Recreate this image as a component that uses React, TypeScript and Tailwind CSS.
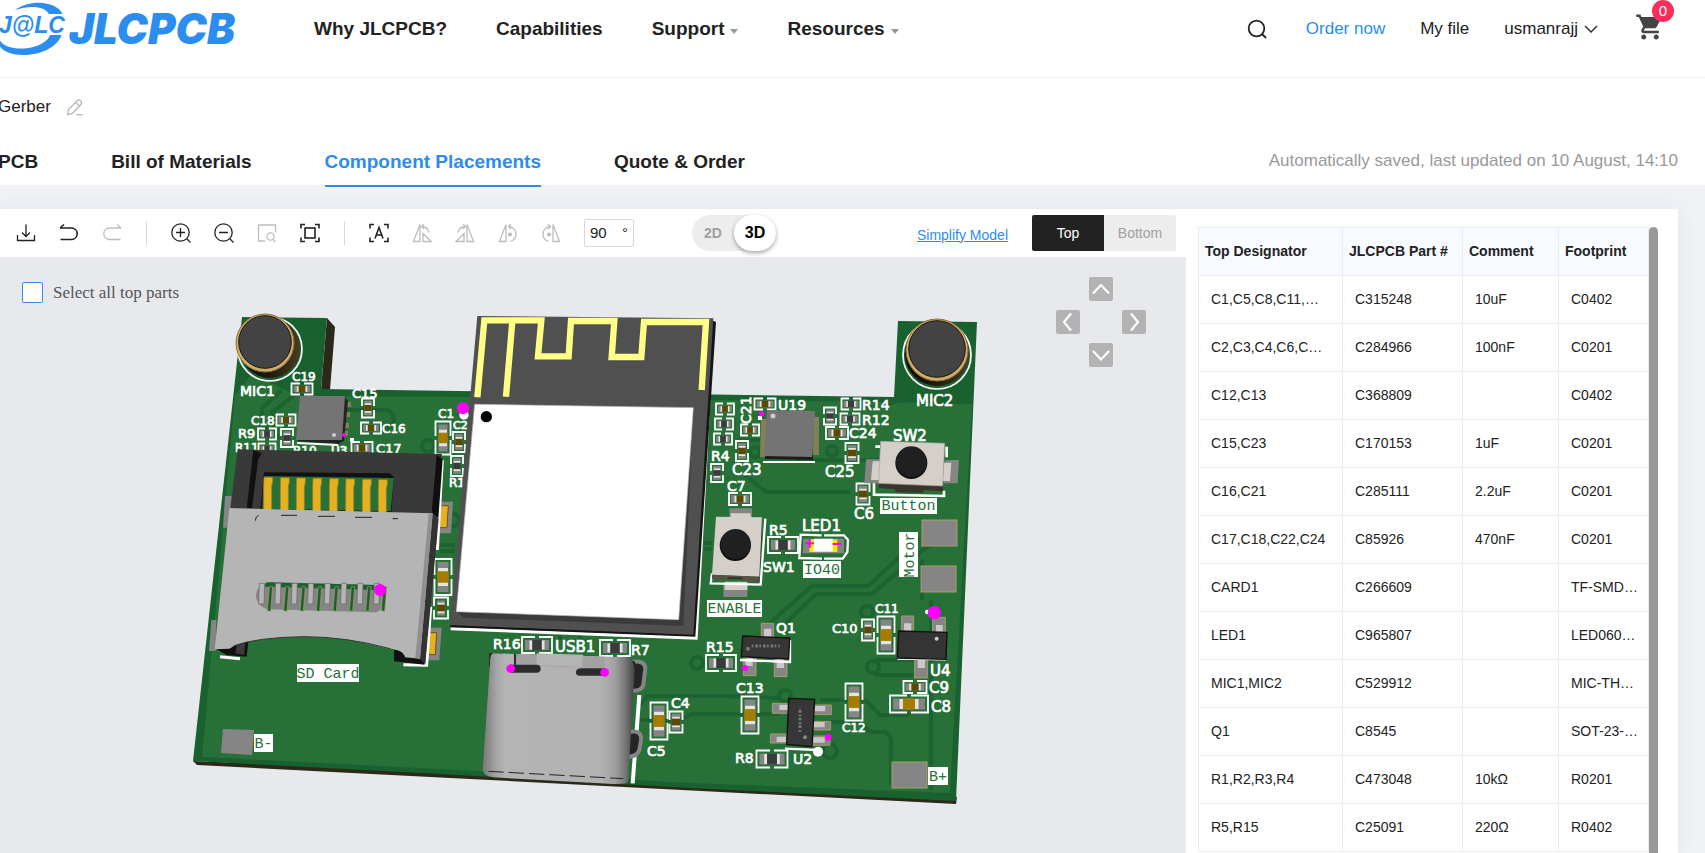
import { ReactNode } from "react";
import { MdShoppingCart } from "react-icons/md";

const rows = [
  ["C1,C5,C8,C11,…", "C315248", "10uF", "C0402"],
  ["C2,C3,C4,C6,C…", "C284966", "100nF", "C0201"],
  ["C12,C13", "C368809", "", "C0402"],
  ["C15,C23", "C170153", "1uF", "C0201"],
  ["C16,C21", "C285111", "2.2uF", "C0201"],
  ["C17,C18,C22,C24", "C85926", "470nF", "C0201"],
  ["CARD1", "C266609", "", "TF-SMD…"],
  ["LED1", "C965807", "", "LED060…"],
  ["MIC1,MIC2", "C529912", "", "MIC-TH…"],
  ["Q1", "C8545", "", "SOT-23-…"],
  ["R1,R2,R3,R4", "C473048", "10kΩ", "R0201"],
  ["R5,R15", "C25091", "220Ω", "R0402"],
];

/* ---------- icons ---------- */

function Icon({ children, size = 20, sw = 1.3 }: { children: ReactNode; size?: number; sw?: number }) {
  return (
    <svg width={size} height={size} viewBox="0 0 20 20" fill="none" stroke="currentColor" strokeWidth={sw} aria-hidden="true" className="block shrink-0">
      {children}
    </svg>
  );
}

const corners = "M1 5.5V1.5h4M15 1.5h4v4M19 14.5v4h-4M5 18.5H1v-4";

const icons = {
  download: <Icon><path d="M10 1.5v12M6 9.5l4 4 4-4M1.5 12v5.5h17V12" /></Icon>,
  undo: <Icon sw={1.6}><path d="M1 5h12a6 5.8 0 0 1 0 11.5H1.5M5 1.5L1 5" /></Icon>,
  redo: <Icon><path d="M19 5H7a6 5.8 0 0 0 0 11.5h11.5M15 1.5L19 5" /></Icon>,
  zoomIn: <Icon><circle cx="9.5" cy="9.5" r="8.7" /><path d="M9.5 5v9M5 9.5h9M15.8 15.8l3.7 3.7" /></Icon>,
  zoomOut: <Icon><circle cx="9.5" cy="9.5" r="8.7" /><path d="M5 9.5h9M15.8 15.8l3.7 3.7" /></Icon>,
  area: <Icon><path d="M8 18H1.5V2h17v7.5" /><circle cx="13.5" cy="13.5" r="3.6" /><path d="M16 16.5l2.5 2.5" /></Icon>,
  fit: <Icon sw={1.6}><path d={corners} /><rect x="5" y="5" width="10" height="10" /></Icon>,
  auto: <Icon sw={1.6}><path d={corners} /><path d="M6 15.5L10 4.5l4 11M7.5 12h5" /></Icon>,
  rotL: <Icon><path d="M8 1.5V18.5H1.5zM11 18.5V10.5l8 8zM9.5 3.5c4 0 6.5 2 7.5 6M12 1L9.5 3.5 12 6" /></Icon>,
  rotR: <Icon><path d="M12 1.5V18.5h6.5zM9 18.5V10.5l-8 8zM10.5 3.5c-4 0-6.5 2-7.5 6M8 1l2.5 2.5L8 6" /></Icon>,
  turnL: <Icon><path d="M8 1.5V18.5H1.5zM10.5 3.5c4.5.5 7.5 3.5 7.5 7.5s-2.5 6.5-5.5 7.5M13 1l-2.5 2.5L13 6" /><circle cx="12" cy="11.5" r="1.4" fill="currentColor" /></Icon>,
  turnR: <Icon><path d="M12 1.5V18.5h6.5zM9.5 3.5C5 4 2 7 2 11s2.5 6.5 5.5 7.5M7 1l2.5 2.5L7 6" /><circle cx="8" cy="11.5" r="1.4" fill="currentColor" /></Icon>,
};

function Tool({ label, icon, off }: { label: string; icon: ReactNode; off?: boolean }) {
  return (
    <button type="button" aria-label={label} disabled={off} className={off ? "text-[#bdbdbd]" : "text-[#222]"}>
      {icon}
    </button>
  );
}

function Divider() {
  return <span className="mx-px h-6 w-px bg-[#d8d8d8]" />;
}

function PanButton({ label, d, place }: { label: string; d: string; place: string }) {
  return (
    <button type="button" aria-label={label} className={`flex h-6 w-6 items-center justify-center rounded-xs bg-[#b3b3b3] text-white ${place}`}>
      <Icon sw={2.2}><path d={d} /></Icon>
    </button>
  );
}

function Logo() {
  return (
    <svg width="238" height="56" viewBox="0 0 238 56" role="img" aria-label="JLCPCB" className="block shrink-0" fill="#2b8def">
      <path d="M15 10C25 3 38 1.5 48 4C56 6 61 10 62.5 14H49C45 7 32 4.5 15 10z" />
      <path d="M0 40.5C3 46 12 49 24 48.5C37 47.5 48 42 50 35H61.5C58 46 42 55 24 55C12 55 4 52 0 46.5z" />
      <text x="-1" y="33" fontFamily="'Liberation Sans', sans-serif" fontStyle="italic" fontWeight="700" fontSize="23">J@LC</text>
      <text x="69" y="44" fontFamily="Inter, sans-serif" fontStyle="italic" fontWeight="900" fontSize="42">JLCPCB</text>
    </svg>
  );
}

/* ---------- board ---------- */

type Kind = "gold" | "cap" | "res";
const bodyFill: Record<Kind, string> = { gold: "#a67c00", cap: "#5b4a05", res: "#3b3b3b" };

const chips: [number, number, number, number, Kind][] = [
  [302, 389, 21, 11, "cap"], [286, 420, 19, 11, "cap"], [267, 434, 18, 11, "res"], [287, 438, 12, 18, "res"],
  [267, 448, 17, 9, "res"], [368, 408, 12, 19, "cap"], [371, 428, 20, 11, "cap"], [362, 448, 21, 12, "cap"],
  [443, 438, 15, 33, "gold"], [459, 442, 12, 20, "cap"], [457, 466, 12, 20, "res"], [443, 577, 17, 36, "gold"],
  [441, 608, 14, 21, "cap"], [725, 409, 18, 11, "cap"], [724, 424, 18, 11, "res"], [723, 439, 18, 11, "res"],
  [717, 473, 12, 18, "res"], [765, 404, 21, 11, "cap"], [750, 430, 18, 11, "cap"], [742, 451, 12, 20, "cap"],
  [830, 416, 12, 17, "res"], [851, 404, 19, 11, "res"], [850, 419, 19, 11, "res"], [837, 433, 22, 12, "cap"],
  [852, 453, 13, 20, "cap"], [863, 494, 13, 21, "cap"], [740, 499, 22, 12, "cap"], [783, 545, 30, 16, "res"],
  [721, 663, 30, 16, "res"], [750, 715, 17, 37, "gold"], [772, 759, 31, 17, "res"], [854, 702, 17, 37, "gold"],
  [868, 630, 12, 21, "cap"], [886, 635, 17, 37, "gold"], [915, 687, 23, 12, "cap"], [909, 704, 38, 17, "gold"],
  [537, 645, 30, 16, "res"], [615, 648, 30, 16, "res"], [659, 721, 17, 37, "gold"], [676, 722, 13, 21, "cap"],
];

function Chip({ c }: { c: [number, number, number, number, Kind] }) {
  const [x, y, w0, h0, kind] = c;
  const tall = h0 > w0;
  const w = tall ? h0 : w0;
  const h = tall ? w0 : h0;
  const a = w / 2;
  const b = h / 2;
  const inset = h > 13 ? 3 : 2.2;
  return (
    <g transform={`translate(${x} ${y})${tall ? " rotate(90)" : ""}`}>
      <path d={`M-2 ${-b}H${-a}V${b}H-2M2 ${-b}H${a}V${b}H2`} fill="none" stroke="#fff" strokeWidth="1.8" />
      <rect x={-a + inset} y={-b + inset} width={w - inset * 2} height={h - inset * 2} fill="#858585" />
      <rect x={-a * 0.5} y={-b + inset + 0.5} width={a} height={h - inset * 2 - 1} fill="#e4e4e4" />
      <rect x={-a * 0.32} y={-b + inset} width={a * 0.64} height={h - inset * 2} fill={bodyFill[kind]} />
    </g>
  );
}

const marks: [string, number, number, number][] = [
  ["C19", 292, 381, 12], ["MIC1", 240, 396, 14], ["C18", 251, 425, 12], ["R9", 238, 438, 13], ["R11", 235, 452, 12],
  ["C15", 352, 398, 13], ["C16", 382, 433, 12], ["C17", 376, 453, 13], ["R10", 293, 455, 12], ["U3", 331, 455, 12],
  ["C1", 438, 418, 12], ["C2", 453, 429, 11], ["R1", 449, 487, 12], ["R4", 711, 461, 14], ["C23", 732, 475, 15],
  ["C7", 727, 491, 14], ["U19", 778, 410, 14], ["R14", 862, 410, 14], ["R12", 862, 425, 14], ["C24", 849, 438, 14],
  ["C25", 825, 477, 15], ["SW2", 893, 441, 15], ["C6", 854, 519, 15], ["MIC2", 916, 406, 15], ["R5", 769, 535, 14],
  ["LED1", 802, 531, 15], ["SW1", 763, 572, 14], ["C11", 875, 613, 12], ["C10", 832, 633, 13], ["Q1", 776, 633, 14],
  ["R15", 706, 652, 14], ["C13", 736, 693, 14], ["C12", 842, 732, 12], ["C9", 929, 693, 15], ["C8", 931, 712, 15],
  ["U4", 930, 676, 15], ["U2", 793, 764, 14], ["R8", 735, 763, 14], ["R16", 493, 649, 14], ["USB1", 555, 652, 15],
  ["R7", 631, 655, 14], ["C4", 671, 708, 14], ["C5", 647, 756, 14],
];

const labels: [string, number, number, number, number][] = [
  ["SD Card", 297, 664, 62, 18], ["ENABLE", 707, 600, 55, 17], ["Button", 880, 498, 57, 16],
  ["IO40", 803, 561, 38, 17], ["B-", 254, 734, 19, 18], ["B+", 928, 767, 20, 18],
];

function Pin({ x, y, w, h }: { x: number; y: number; w: number; h: number }) {
  return <rect x={x} y={y} width={w} height={h} fill="#858585" stroke="#a79f63" strokeWidth="1" />;
}

function Mic({ x, y, dx, dy, r }: { x: number; y: number; dx: number; dy: number; r: number }) {
  return (
    <g>
      <circle cx={x + dx} cy={y + dy} r={r + 3} fill="#19612f" stroke="#fff" strokeWidth="1.7" />
      <circle cx={x + dx} cy={y + dy - 1} r={r + 1} fill="url(#can)" />
      <circle cx={x} cy={y} r={r} fill="#cfac68" stroke="#8a6f3c" strokeWidth="1" />
      <circle cx={x} cy={y - 1} r={r - 2.7} fill="#434343" stroke="#1a1712" strokeWidth="1" />
    </g>
  );
}

function Board() {
  return (
    <svg viewBox="0 257 1186 596" className="block h-full w-full" role="img" aria-label="3D view of the board">
      <defs>
        <linearGradient id="can"><stop offset="0" stopColor="#0d0b08" /><stop offset="0.5" stopColor="#201a10" /><stop offset="1" stopColor="#4a3b22" /></linearGradient>
        <linearGradient id="shell">
          <stop offset="0" stopColor="#777" /><stop offset="0.09" stopColor="#a5a5a5" /><stop offset="0.15" stopColor="#b4b4b4" />
          <stop offset="0.78" stopColor="#b2b2b2" /><stop offset="0.87" stopColor="#a0a0a0" /><stop offset="0.94" stopColor="#767676" /><stop offset="1" stopColor="#444" />
        </linearGradient>
      </defs>

      {/* substrate */}
      <path d="M327 318L335 327L330 390L321 390z" fill="#2b2918" />
      <path d="M193 761L197 765L450 778L956 804L957 797L440 771z" fill="#2b2918" />
      <path d="M242 317L327 318L321 389L894 397L898 321L977 322L956 801L690 788L440 774L193 761z" fill="#19612f" />
      <path d="M235 396L470 397L890 402L972 404L950 793L690 783L440 769L202 757z" fill="#277038" />
      <path d="M255 376L320 391L325 325L300 318L243 355z" fill="#19612f" />
      <path d="M233 398L252 374L300 397z" fill="#277038" />

      {/* copper under the mask */}
      <g fill="none" stroke="#1c6331" strokeWidth="4">
        <path d="M270 440L262 420V408L282 390M278 440L272 424V412L296 394M288 400L310 380M340 410H385a9 9 0 0 1 0 18h-12" />
        <path d="M745 475L766 492H850M795 460H880M760 440H738M885 405L921 393L935 378M771 622L812 586H868L920 538M784 625L816 594H872L935 540" />
        <path d="M640 705L648 696H720L780 698M640 720H680L692 714H780M820 700H865L880 715H910M820 722H860L870 732H886L891 738V785M931 600V790M922 600V560M875 660h42M875 675h42" />
        <path d="M440 545H455M440 551H455M704 543H712M704 549H712M560 640V625M580 640V625" />
        <circle cx="697" cy="663" r="6" /><circle cx="867" cy="612" r="6" /><circle cx="830" cy="751" r="7" /><circle cx="785" cy="696" r="6" />
        <circle cx="755" cy="452" r="5" /><circle cx="832" cy="451" r="5" /><circle cx="428" cy="446" r="6" /><circle cx="873" cy="667" r="6" /><circle cx="453" cy="520" r="6" />
      </g>

      {/* pads */}
      <Pin x={922} y={520} w={35} h={26} />
      <Pin x={921} y={566} w={35} h={26} />
      <Pin x={892} y={762} w={35} h={26} />
      <path d="M223 729L254 730L252 755L221 753z" fill="#858585" />

      {/* reference marks */}
      <g fill="#fff" stroke="#fff" strokeWidth="0.7" fontFamily="'DejaVu Sans', sans-serif">
        {marks.map(([t, x, y, s]) => (
          <text key={t + x} x={x} y={y} fontSize={s}>{t}</text>
        ))}
        <text transform="translate(751 424) rotate(-90)" fontSize="14">C21</text>
      </g>
      {labels.map(([t, x, y, w, h]) => (
        <g key={t}>
          <rect x={x} y={y} width={w} height={h} fill="#fff" />
          <text x={x + w / 2} y={y + h - 4} textAnchor="middle" fontSize="15" fill="#277038" fontFamily="'Liberation Mono', monospace">{t}</text>
        </g>
      ))}
      <rect x="899" y="532" width="19" height="45" fill="#fff" />
      <text transform="translate(914 555) rotate(-90)" textAnchor="middle" fontSize="15" fill="#277038" fontFamily="'Liberation Mono', monospace">Motor</text>

      {chips.map((c) => <Chip key={`${c[0]}-${c[1]}`} c={c} />)}

      <Mic x={265} y={343} dx={5} dy={6} r={29} />
      <Mic x={937} y={350} dx={0} dy={5} r={31} />

      {/* microphone amplifiers */}
      <g fill="#857f58">
        <path d="M345 402h6v5h-6zM344 412h6v5h-6zM343 423h6v5h-6zM342 431h6v5h-6z" />
        <path d="M761 419h6v38h-7zM814 417h5v38h-6z" />
      </g>
      <path d="M344 396L348 401L344 441L338 444L297 441L300 439z" fill="#232323" />
      <path d="M300 396L345 396L342 440L296 440z" fill="#747474" />
      <circle cx="334" cy="435" r="2" fill="#ccc" />
      <path d="M297 443L338 445M763 462H815" stroke="#fff" strokeWidth="2" />
      <path d="M765 455H813V460L765 459z" fill="#1c1c1c" />
      <path d="M767 410L815 411L812 457L764 456z" fill="#747474" />
      <circle cx="773" cy="416" r="2.5" fill="#ccc" />
      <rect x="758" y="416" width="4" height="4" fill="#fff" />
      <rect x="350" y="438" width="4" height="4" fill="#fff" />

      {/* card socket */}
      <g transform="translate(190 440) scale(0.333333)">
        <path d="M105 168h20l-4 95h-22zM64 540h15l-2 93H57zM742 185h47l-6 95h-45zM712 563h43l-7 98h-42z" fill="#858585" />
        <path d="M745 197h30l-4 66h-30zM712 578h28l-4 66h-28z" fill="#e3b122" stroke="#6a5410" strokeWidth="3" />
        <path d="M757 60L742 330M722 500L710 676L640 674M90 650L150 656" stroke="#fff" strokeWidth="9" fill="none" />
        <path d="M143 28L756 42L740 225L120 215z" fill="#393939" />
        <path d="M190 30L215 40L204 60L186 205H170z" fill="#111" />
        <path d="M222 97L600 100L612 112L604 216L212 206z" fill="#111" />
        <path d="M222 108L612 114L602 214L216 206z" fill="#277038" />
        {[222, 272, 320, 369, 419, 468, 518, 566].map((x, i) => (
          <path key={x} d={`M${x} ${112 + i}h26v14l-3 12v80h-24v-78z`} fill="#e3b122" stroke="#a57c10" strokeWidth="2" />
        ))}
        <path d="M740 45L758 58L745 235L725 218z" fill="#0f0f0f" />
        <path d="M80 628L175 605L170 650L110 645zM612 630L700 640L704 674L612 664z" fill="#111" />
        <path d="M142 612L166 606L162 645L136 640z" fill="#3c3c3c" />
        <path d="M722 220L746 236L706 670L685 655z" fill="#333" />
        <path d="M118 204L728 220L690 656L645 652Q640 628 590 625Q470 590 340 590Q160 595 118 626L74 628z" fill="#b5b5b5" />
        <path d="M716 220L728 220L690 656L676 655z" fill="#909090" />
        <path d="M273 226h48M384 229h51M495 232h51M608 236h16M196 242q0-12 10-16" stroke="#222" strokeWidth="3" fill="none" />
        <path d="M600 626Q470 590 340 590Q200 592 130 618" stroke="#333" strokeWidth="3" fill="none" />
        <path d="M236 427L560 435Q590 440 588 480Q575 520 550 517L232 508Q200 500 197 465Q205 430 236 427z" fill="#858585" />
        <path d="M230 427L562 435L558 450L222 440z" fill="#19612f" />
        {[238, 287, 336, 385, 435, 484, 533, 580].map((x) => (
          <path key={x} d={`M${x} 440L${x + 10} 440L${x + 4} 514L${x - 6} 512z`} fill="#19612f" stroke="#a79f63" strokeWidth="2" />
        ))}
        {[208, 257, 306, 355, 405, 454, 503, 553].map((x) => (
          <path key={x} d={`M${x} 430h16l-2 62h-16z`} fill="#b5b5b5" stroke="#666" strokeWidth="2" />
        ))}
        <circle cx="570" cy="450" r="18" fill="#f0f" />
      </g>

      {/* radio module */}
      <g transform="translate(440 300) scale(0.333333)">
        <path d="M818 90L768 1014L32 986" stroke="#fff" strokeWidth="10" fill="none" />
        <path d="M814 60L828 66L766 1010L30 982L32 974L758 1003z" fill="#151515" />
        <path d="M112 48L820 55L760 1004L30 975z" fill="#505050" />
        <path d="M112 292L133 61H304L294 169H386L393 63H523L515 171H604L612 66H798L785 270M198 290L217 64" fill="none" stroke="#ffff86" strokeWidth="19" />
        <path d="M50 934L70 953L730 978L760 330L762 325L718 958z" fill="#3b3b3b" />
        <path d="M104 313L760 323L716 959L49 935z" fill="#fff" stroke="#bbb" strokeWidth="2" />
        <circle cx="139" cy="350" r="17" fill="#000" />
        <circle cx="72" cy="345" r="14" fill="#fff" />
        <circle cx="69" cy="325" r="18" fill="#f0f" />
      </g>

      {/* usb receptacle */}
      <g transform="translate(440 600) scale(0.333333)">
        <path d="M598 285L578 550" stroke="#fff" strokeWidth="12" />
        <path d="M575 186Q615 180 616 205L610 255Q605 275 570 272M572 395Q605 390 603 420L598 450Q590 472 560 470" stroke="#858585" strokeWidth="12" fill="#252525" />
        <path d="M148 160h40v40h-40zM560 175l25 10v30h-25z" fill="#1c1c1c" />
        <path d="M160 160L565 172Q582 180 584 210L564 545Q560 555 480 550L160 532Q128 526 128 510L150 190Q150 160 160 160z" fill="url(#shell)" />
        <path d="M226 162L494 170V205L226 196z" fill="#a2a2a2" />
        <path d="M290 160L430 164L425 200L290 196z" fill="#b4b4b4" />
        <path d="M222 162h6v32h64q10 2 10 12t-10 12h-80v-24h10z" fill="#2c2c2c" />
        <path d="M492 205h-68q-14 0-16 10t10 12h75z" fill="#2c2c2c" />
        <path d="M145 514L550 536" stroke="#222" strokeWidth="3" strokeDasharray="46 15" />
        <circle cx="212" cy="206" r="13" fill="#f0f" /><circle cx="494" cy="217" r="13" fill="#f0f" />
      </g>

      {/* tactile switches and led */}
      <g transform="translate(690 300) scale(0.333333)">
        <path d="M118 625h68v40h-68zM100 850h72v41h-72z" fill="#858585" />
        <path d="M122 640h60v20h-60zM104 845h68v25h-68z" fill="#d5cfca" />
        <path d="M226 656L212 854L62 850L66 820" stroke="#fff" strokeWidth="7" fill="none" />
        <path d="M66 828L205 830L214 655L216 700L208 846L150 838L66 836z" fill="#39342e" />
        <path d="M78 650L216 652L208 830L66 824z" fill="#d5cfca" />
        <path d="M66 824L208 830L204 846L160 843L156 832H114L110 840L66 836z" fill="#57514a" />
        <circle cx="136" cy="736" r="47" fill="#111" /><circle cx="137" cy="732" r="45" fill="#202020" />

        <path d="M528 478h45l-5 72h-45zM765 480h42l-4 70h-42z" fill="#858585" />
        <path d="M548 484h25l-5 56h-25zM762 488h22l-4 55h-22z" fill="#d5cfca" />
        <path d="M556 440h14M770 440v32M552 550v34L762 588V572" stroke="#fff" strokeWidth="8" fill="none" />
        <path d="M566 548L760 556L758 574L700 570V578L616 576V568L566 564z" fill="#39342e" />
        <path d="M572 424L764 430L758 558L566 550z" fill="#d5cfca" stroke="#aaa49d" strokeWidth="2" />
        <circle cx="664" cy="489" r="48" fill="#111" /><circle cx="664" cy="485" r="46" fill="#202020" />

        <path d="M395 706L332 704L328 774L396 776M402 706H462L474 720L472 756L458 776H402" fill="none" stroke="#fff" strokeWidth="7" />
        <path d="M340 716h122v44H338z" fill="#858585" />
        <path d="M358 718h84v38h-84z" fill="#f5e800" /><path d="M372 716h56v38h-58z" fill="#fff" />
        <path d="M346 730h26M359 717v26M428 732h26" stroke="#f0f" strokeWidth="6" />
        <circle cx="215" cy="341" r="8" fill="#f0f" />
      </g>

      {/* regulators and transistor */}
      <g transform="translate(690 560) scale(0.333333)">
        <g fill="#858585" stroke="#a79f63" strokeWidth="3">
          <path d="M214 190h37v45h-37zM160 292h38v55h-38zM253 294h38v56h-38zM635 168h36v50h-36zM728 172h38v46h-38zM674 292h38v62h-38z" />
          <path d="M247 430h46v30h-46zM241 522h50v27h-50zM370 435h54v29h-54zM370 484h52v26h-52zM366 528h54v28h-54z" />
        </g>
        <path d="M222 206h22v24h-22zM166 294h22v24h-22zM260 296h22v28h-22zM642 190h22v24h-22zM738 195h20v22h-20zM683 296h22v28h-22zM268 434h26v16h-26zM260 530h28v16h-28zM374 438h32v16h-32zM370 486h34v16h-34zM370 532h34v16h-34z" fill="#c9c9c9" />
        <path d="M150 300L300 306V240M622 296L768 298M285 566L384 570" stroke="#fff" strokeWidth="7" fill="none" />
        <path d="M158 228L299 234L296 297L154 290z" fill="#363636" stroke="#111" strokeWidth="4" />
        <path d="M626 213L771 217L768 298L622 294z" fill="#343434" stroke="#111" strokeWidth="4" />
        <path d="M296 415L374 418L366 560L290 553z" fill="#363636" stroke="#111" strokeWidth="4" />
        <path d="M185 258h84M330 515v-70" stroke="#777" strokeWidth="9" strokeDasharray="5 6 8 4" />
        <circle cx="174" cy="266" r="6" fill="#777" /><circle cx="740" cy="236" r="6" fill="#ccc" /><circle cx="345" cy="532" r="6" fill="#888" />
        <circle cx="384" cy="575" r="15" fill="#fff" />
        <circle cx="712" cy="156" r="7" fill="#fff" />
        <circle cx="733" cy="158" r="20" fill="#f0f" /><circle cx="165" cy="324" r="9" fill="#f0f" /><circle cx="415" cy="531" r="10" fill="#f0f" />
      </g>
      <circle cx="344" cy="435" r="2" fill="#f0f" />
    </svg>
  );
}

/* ---------- page ---------- */

function Caret() {
  return <svg width="8" height="5" viewBox="0 0 8 5" fill="#999" aria-hidden="true" className="mt-1"><path d="M0 0h8L4 5z" /></svg>;
}

export default function App() {
  return (
    <div className="flex h-screen flex-col overflow-hidden bg-[#f0f2f6] font-['Liberation_Sans',Arial,sans-serif] text-[#222]">
      <header className="h-[78px] shrink-0 border-b border-[#f1f1f1] bg-white">
        <div className="flex h-[58px] items-center">
          <a href="#home" className="self-start"><Logo /></a>
          <nav className="ml-[76px] flex items-center gap-[49px] text-[19px] font-bold whitespace-nowrap">
            <a href="#why">Why JLCPCB?</a>
            <a href="#capabilities">Capabilities</a>
            <a href="#support" className="flex items-center gap-1.5">Support <Caret /></a>
            <a href="#resources" className="flex items-center gap-1.5">Resources <Caret /></a>
          </nav>
          <div className="ml-auto flex items-center gap-[35px] pr-10 text-[17px] whitespace-nowrap">
            <button type="button" aria-label="Search" className="mr-1">
              <Icon sw={1.8}><circle cx="9.5" cy="9.5" r="7.8" /><path d="M15 15l4 4" /></Icon>
            </button>
            <a href="#order" className="text-[#2b8def]">Order now</a>
            <a href="#files">My file</a>
            <button type="button" className="flex items-center gap-1.5">
              usmanrajj
              <svg width="14" height="8" viewBox="0 0 14 8" fill="none" stroke="#333" strokeWidth="1.5" aria-hidden="true"><path d="M1 1l6 6 6-6" /></svg>
            </button>
            <a href="#cart" aria-label="Cart" className="relative -mt-1 ml-0.5 block">
              <MdShoppingCart size={30} color="#444" />
              <span className="absolute -top-3 -right-[9px] flex h-[22px] w-[22px] items-center justify-center rounded-full bg-[#fa2d5c] text-[15px] text-white">0</span>
            </a>
          </div>
        </div>
      </header>

      <section className="shrink-0 bg-white">
        <div className="flex h-[58px] items-center gap-[15px] text-[17px]">
          <span className="-ml-0.5">Gerber</span>
          <button type="button" aria-label="Rename" className="text-[#b5b5b5]">
            <Icon size={17} sw={1.5}><path d="M2 18.5l1-6L13 2q2-2 4 0t.5 4.5L7.5 17 2 18.5zM11.5 4l4 4M12 18.5h7.5" /></Icon>
          </button>
        </div>
        <div className="flex h-[49px] items-stretch">
          <nav className="flex gap-[73px] text-[19px] font-bold whitespace-nowrap">
            <a href="#pcb" className="-ml-0.5 flex items-center pt-1">PCB</a>
            <a href="#bom" className="flex items-center pt-1">Bill of Materials</a>
            <a href="#placements" aria-current="page" className="-mb-0.5 flex items-center border-b-2 border-[#2b8def] pt-1 text-[#2b8def]">Component Placements</a>
            <a href="#quote" className="flex items-center pt-1">Quote &amp; Order</a>
          </nav>
          <p className="ml-auto flex items-center pr-[27px] text-[17px] text-[#999]">Automatically saved, last updated on 10 August, 14:10</p>
        </div>
      </section>

      <main className="mt-6 mr-[27px] flex min-h-0 flex-1 bg-white shadow-[0_0_20px_rgba(40,60,110,0.08)]">
        <section className="flex min-w-0 flex-1 flex-col">
          <div className="flex h-12 shrink-0 items-center pr-[10px] pl-4">
            <div className="flex items-center gap-[23px]">
              <Tool label="Download" icon={icons.download} />
              <Tool label="Undo" icon={icons.undo} />
              <Tool label="Redo" icon={icons.redo} off />
              <Divider />
              <Tool label="Zoom in" icon={icons.zoomIn} />
              <Tool label="Zoom out" icon={icons.zoomOut} />
              <Tool label="Zoom to area" icon={icons.area} off />
              <Tool label="Fit to view" icon={icons.fit} />
              <Divider />
              <Tool label="Auto align" icon={icons.auto} />
              <Tool label="Rotate left" icon={icons.rotL} off />
              <Tool label="Rotate right" icon={icons.rotR} off />
              <Tool label="Turn left" icon={icons.turnL} off />
              <Tool label="Turn right" icon={icons.turnR} off />
              <label className="flex h-7 w-[50px] items-center justify-between rounded-xs border border-[#d9d9d9] px-[5px] text-[15px]">
                <input aria-label="Angle" defaultValue="90" className="w-6 bg-transparent outline-none" />
                <span>°</span>
              </label>
            </div>
            <div className="ml-[58px] flex h-9 w-[84px] items-center rounded-full bg-[#ededed] font-bold">
              <button type="button" className="flex-1 text-[14px] text-[#a0a0a0]">2D</button>
              <button type="button" className="h-9 w-[42px] rounded-full bg-white text-base text-black shadow-[0_2px_4px_rgba(0,0,0,0.35)]">3D</button>
            </div>
            <a href="#simplify" className="mr-6 ml-auto pt-1 text-[14px] text-[#2b8def] underline">Simplify Model</a>
            <div className="flex h-9 overflow-hidden rounded-xs text-[14px]">
              <button type="button" className="w-[72px] bg-[#222] text-white">Top</button>
              <button type="button" className="w-[72px] bg-[#ededed] text-[#a0a0a0]">Bottom</button>
            </div>
          </div>
          <div className="relative min-h-0 flex-1 bg-[#e8e9ed]">
            <Board />
            <label className="absolute top-[23px] left-[22px] flex items-center gap-2.5 font-['Liberation_Serif',serif] text-[17px] text-[#555]">
              <input type="checkbox" className="h-[21px] w-[21px] appearance-none rounded-xs border border-[#2b8def] bg-white" />
              Select all top parts
            </label>
            <div className="absolute top-5 right-10 grid grid-cols-3 gap-[9px]">
              <PanButton label="Pan up" d="M2 14.5l8-8.5 8 8.5" place="col-start-2" />
              <PanButton label="Pan left" d="M13 1.5l-7 8.5 7 8.5" place="col-start-1 row-start-2" />
              <PanButton label="Pan right" d="M7 1.5l7 8.5-7 8.5" place="col-start-3 row-start-2" />
              <PanButton label="Pan down" d="M2 6l8 8.5 8-8.5" place="col-start-2 row-start-3" />
            </div>
          </div>
        </section>

        <aside className="flex w-[492px] shrink-0 items-stretch overflow-hidden pt-[18px] pr-5 pl-3">
          <div className="min-w-0 flex-1 overflow-hidden">
            <table className="w-full table-fixed border-collapse text-left text-[14px]">
              <colgroup>
                <col className="w-36" /><col className="w-[120px]" /><col className="w-24" /><col />
              </colgroup>
              <thead>
                <tr className="h-12 bg-[#f7faff]">
                  {["Top Designator", "JLCPCB Part #", "Comment", "Footprint"].map((h) => (
                    <th key={h} scope="col" className="border border-[#ebecf0] px-1.5 font-bold whitespace-nowrap">{h}</th>
                  ))}
                </tr>
              </thead>
              <tbody>
                {rows.map((r) => (
                  <tr key={r[0]} className="h-12">
                    {r.map((c, i) => (
                      <td key={i} className="border border-[#ebecf0] pl-3 whitespace-nowrap">{c}</td>
                    ))}
                  </tr>
                ))}
              </tbody>
            </table>
          </div>
          <div className="w-[9px] shrink-0 rounded-t-full bg-[#999]" />
        </aside>
      </main>
    </div>
  );
}
